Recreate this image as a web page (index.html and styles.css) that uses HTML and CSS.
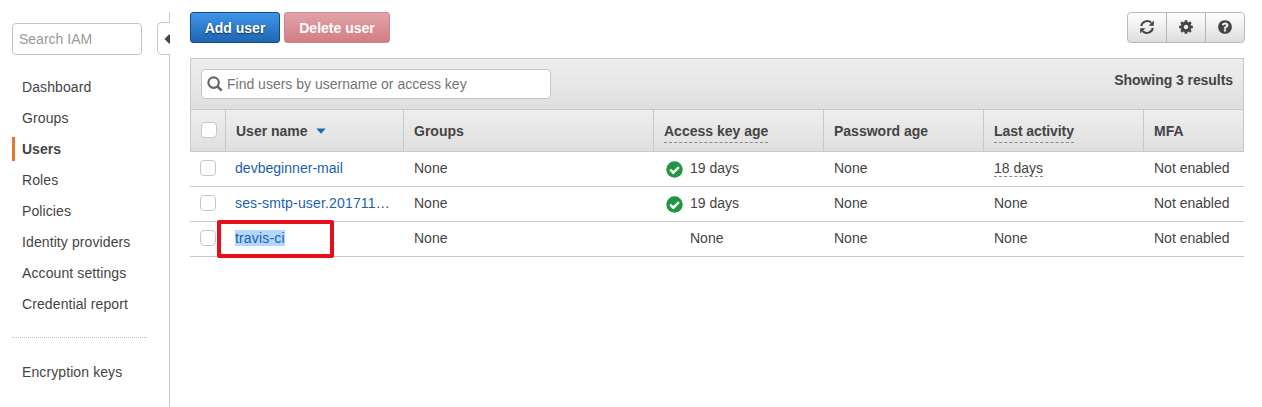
FILE: index.html
```html
<!DOCTYPE html>
<html lang="en">
<head>
<meta charset="utf-8">
<title>IAM Users</title>
<link rel="stylesheet" href="styles.css">
</head>
<body>
<svg class="defs" aria-hidden="true">
  <symbol id="refresh" viewBox="0 0 16 16"><path d="M2.200 7A6 6 0 0 1 12.300 3.800M13.800 9A6 6 0 0 1 3.700 12.200" fill="none" stroke="currentColor" stroke-width="2"/><path d="M14.800 1.600V6.800H9.600ZM1.200 14.400V9.200H6.400Z"/></symbol>
  <symbol id="cog" viewBox="0 0 1792 1792"><path d="M1152 896q0-106-75-181t-181-75-181 75-75 181 75 181 181 75 181-75 75-181zm512-109v222q0 12-8 23t-20 13l-185 28q-19 54-39 91 35 50 107 138 10 12 10 25t-9 23q-27 37-99 108t-94 71q-12 0-26-9l-138-108q-44 23-91 38-16 136-29 186-7 28-36 28h-222q-14 0-24.500-8.500t-11.500-21.500l-28-184q-49-16-90-37l-141 107q-10 9-25 9-14 0-25-11-126-114-165-168-7-10-7-23 0-12 8-23 15-21 51-66.500t54-70.500q-27-50-41-99l-183-27q-13-2-21-12.500t-8-23.500v-222q0-12 8-23t19-13l186-28q14-46 39-92-40-57-107-138-10-12-10-24 0-10 9-23 26-36 98.500-107.500t94.500-71.500q13 0 26 10l138 107q44-23 91-38 16-136 29-186 7-28 36-28h222q14 0 24.500 8.500t11.500 21.500l28 184q49 16 90 37l142-107q9-9 24-9 13 0 25 10 129 119 165 170 7 8 7 22 0 12-8 23-15 21-51 66.500t-54 70.500q26 50 41 98l183 28q13 2 21 12.500t8 23.500z"/></symbol>
  <symbol id="help" viewBox="0 0 1792 1792"><path d="M1024 1376v-192q0-14-9-23t-23-9h-192q-14 0-23 9t-9 23v192q0 14 9 23t23 9h192q14 0 23-9t9-23zm256-672q0-88-55.500-163t-138.500-116-170-41q-243 0-371 213-15 24 8 42l132 100q7 6 19 6 16 0 25-12 53-68 86-92 34-24 86-24 48 0 85.500 26t37.500 59q0 38-20 61t-68 45q-63 28-115.500 86.500t-52.500 125.500v36q0 14 9 23t23 9h192q14 0 23-9t9-23q0-19 21.500-49.500t54.500-49.500q32-18 49-28.500t46-35 44.500-48 28-60.500 12.500-81zm384 192q0 209-103 385.500t-279.500 279.500-385.500 103-385.500-103-279.500-279.500-103-385.500 103-385.500 279.500-279.500 385.500-103 385.500 103 279.500 279.500 103 385.500z"/></symbol>
  <symbol id="ok" viewBox="0 0 17 17"><circle cx="8.500" cy="8.500" r="8.250" fill="#1f9642"/><path d="M4.200 8.700l3.100 3 5.600-5.600" fill="none" stroke="#fff" stroke-width="2.400"/></symbol>
</svg>
<div class="page">
  <aside class="sidebar">
    <input class="nav-search" type="text" placeholder="Search IAM" aria-label="Search IAM">
    <nav class="nav">
      <a class="nav-item">Dashboard</a>
      <a class="nav-item">Groups</a>
      <a class="nav-item active">Users</a>
      <a class="nav-item">Roles</a>
      <a class="nav-item">Policies</a>
      <a class="nav-item">Identity providers</a>
      <a class="nav-item">Account settings</a>
      <a class="nav-item">Credential report</a>
    </nav>
    <div class="nav-divider"></div>
    <a class="nav-item">Encryption keys</a>
  </aside>
  <div class="divider">
    <div class="rail rail-top"></div>
    <div class="collapse"><svg width="6" height="10" viewBox="0 0 6 10"><path d="M.5 5L5 .5H6V9.500H5Z" fill="#444"/></svg></div>
    <div class="rail rail-bottom"></div>
  </div>
  <main class="main">
    <div class="actions">
      <button class="btn primary">Add user</button>
      <button class="btn danger">Delete user</button>
      <div class="tools">
        <button class="tool" aria-label="Refresh"><svg><use href="#refresh"/></svg></button>
        <button class="tool" aria-label="Settings"><svg><use href="#cog"/></svg></button>
        <button class="tool" aria-label="Help"><svg><use href="#help"/></svg></button>
      </div>
    </div>
    <div class="filter-bar">
      <label class="filter">
        <svg width="16" height="16" viewBox="0 0 16 16" fill="none" stroke="#666"><circle cx="6.600" cy="6.600" r="5.200" stroke-width="2.200"/><path d="M10.400 10.400l4.300 4.300" stroke-width="2.600"/></svg>
        <input type="text" placeholder="Find users by username or access key">
      </label>
      <div class="count">Showing 3 results</div>
    </div>
    <div class="grid head">
      <div class="cell check"><span class="box"></span></div>
      <div class="cell">User name<svg class="sort" width="10" height="6" viewBox="0 0 10 6"><path d="M.3.500H9.700L5 5.700Z" fill="#1a66bb"/></svg></div>
      <div class="cell">Groups</div>
      <div class="cell"><span class="hint">Access key age</span></div>
      <div class="cell">Password age</div>
      <div class="cell"><span class="hint tight">Last activity</span></div>
      <div class="cell">MFA</div>
    </div>
    <div class="grid row">
      <div class="cell check"><span class="box"></span></div>
      <div class="cell name"><a>devbeginner-mail</a></div>
      <div class="cell">None</div>
      <div class="cell key"><svg><use href="#ok"/></svg>19 days</div>
      <div class="cell">None</div>
      <div class="cell"><span class="hint">18 days</span></div>
      <div class="cell">Not enabled</div>
    </div>
    <div class="grid row">
      <div class="cell check"><span class="box"></span></div>
      <div class="cell name wide"><a>ses-smtp-user.201711</a>…</div>
      <div class="cell">None</div>
      <div class="cell key"><svg><use href="#ok"/></svg>19 days</div>
      <div class="cell">None</div>
      <div class="cell">None</div>
      <div class="cell">Not enabled</div>
    </div>
    <div class="grid row marked">
      <div class="cell check"><span class="box"></span></div>
      <div class="cell name wide"><a class="selected">travis-ci</a></div>
      <div class="cell">None</div>
      <div class="cell key none">None</div>
      <div class="cell">None</div>
      <div class="cell">None</div>
      <div class="cell">Not enabled</div>
      <div class="marker"></div>
    </div>
  </main>
</div>
</body>
</html>
```
FILE: styles.css
```css
* { box-sizing: border-box; }
body {
  margin: 0;
  background: #fff;
  color: #444;
  font: 14px/20px "Liberation Sans", Arial, sans-serif;
  overflow: hidden;
}
input, button { font: inherit; margin: 0; }
.defs { display: none; }
.page { display: flex; height: 407px; }

.sidebar { width: 157px; padding: 23px 10px 0 12px; flex: none; }
.nav-search {
  display: block;
  width: 130px;
  height: 32px;
  padding: 0 6px;
  border: 1px solid #c4c4c4;
  border-radius: 4px;
  background: #fff;
}
.nav-search::placeholder { color: #999; opacity: 1; }
.nav { padding-top: 20px; }
.nav-item {
  display: block;
  height: 24px;
  margin-bottom: 7px;
  padding-left: 7px;
  border-left: 3px solid transparent;
  line-height: 24px;
  white-space: nowrap;
  letter-spacing: 0.1px;
}
.nav-item.active { border-left-color: #e07830; font-weight: bold; letter-spacing: 0; }
.nav-divider { border-top: 1px dotted #bbb; margin: 21px 0 22px; }

.divider { width: 13px; flex: none; display: flex; flex-direction: column; padding-top: 12px; }
.rail { border-right: 1px solid #c8c8c8; }
.rail-top { height: 10px; }
.rail-bottom { flex: 1; }
.collapse {
  height: 33px;
  border: 1px solid #c8c8c8;
  border-right: 0;
  border-radius: 5px 0 0 5px;
  display: flex;
  align-items: center;
  justify-content: flex-end;
}

.main { width: 1054px; margin-left: 20px; padding-top: 12px; flex: none; }
.actions { display: flex; gap: 4px; height: 31px; margin-bottom: 15px; margin-right: -1px; }
.btn {
  height: 31px;
  padding: 0;
  border-radius: 3px;
  color: #fff;
  font-weight: bold;
}
.primary {
  width: 90px;
  border: 1px solid #164a80;
  background: linear-gradient(#3f95ea, #1f66b0);
  text-shadow: 0 1px 2px rgba(0, 0, 0, 0.6);
}
.danger {
  width: 106px;
  border: 1px solid #d4838a;
  background: linear-gradient(#e0a3a8, #d37d84);
}
.tools {
  display: flex;
  margin-left: auto;
  width: 118px;
  border: 1px solid #bbb;
  border-radius: 4px;
  background: linear-gradient(#fff, #ddd);
}
.tool {
  width: 39px;
  flex: none;
  padding: 0;
  border: 0;
  border-right: 1px solid #b5b5b5;
  background: none;
  color: #444;
  display: flex;
  align-items: center;
  justify-content: center;
}
.tool:last-child { width: 38px; border-right: 0; }
.tool svg { width: 16px; height: 16px; fill: currentColor; margin-top: -1px; }

.filter-bar {
  display: flex;
  justify-content: space-between;
  height: 51px;
  padding: 10px;
  border: 1px solid #c8c8c8;
  border-bottom: 0;
  background: linear-gradient(#eee, #dfdfdf);
}
.filter {
  display: flex;
  align-items: center;
  width: 350px;
  height: 30px;
  padding: 0 6px 0 5px;
  gap: 4px;
  border: 1px solid #c4c4c4;
  border-radius: 4px;
  background: #fff;
}
.filter input { flex: 1; border: 0; padding: 0; background: none; outline: 0; }
.filter input::placeholder { color: #757575; opacity: 1; }
.count { font-weight: bold; line-height: 22px; letter-spacing: -0.06px; }

.grid {
  display: grid;
  grid-template-columns: 35px 178px 250px 170px 160px 160px 101px;
}
.cell { display: flex; align-items: center; padding-left: 11px; white-space: nowrap; }
.box {
  width: 16px;
  height: 16px;
  border: 1px solid #c6c6c6;
  border-radius: 4px;
  background: #fff;
}
.head {
  height: 43px;
  border: 1px solid #c8c8c8;
  border-left: 0;
  background: linear-gradient(#eee, #dfdfdf);
  font-weight: bold;
}
.head .cell { border-left: 1px solid #c8c8c8; padding: 1px 0 0 10px; }
.head .check { padding-top: 0; padding-bottom: 1px; }
.sort { margin-left: 8px; }
.hint { border-bottom: 1px dashed #888; }
.hint.tight { letter-spacing: -0.08px; }
.head .hint { line-height: 22px; padding-top: 1px; }
.row { height: 35px; border-bottom: 1px solid #c8c8c8; }
.row .cell { padding-bottom: 2px; }
.row .check { padding-left: 10px; }
.row .name { padding-left: 10px; letter-spacing: 0.03px; }
.row .wide { letter-spacing: 0.16px; }
.row .hint { line-height: 16px; }
.name a { color: #1a5fb0; }
.name .selected { background: #b3d7fe; line-height: 16px; }
.row .key { padding-left: 13px; }
.key svg { width: 17px; height: 17px; margin: 2px 7px 0 0; }
.row .none { padding-left: 37px; }
.marked { position: relative; }
.marker {
  position: absolute;
  left: 27px;
  top: -2px;
  width: 117px;
  height: 38px;
  border: 4px solid #e50f1c;
  border-radius: 2px;
}
```
